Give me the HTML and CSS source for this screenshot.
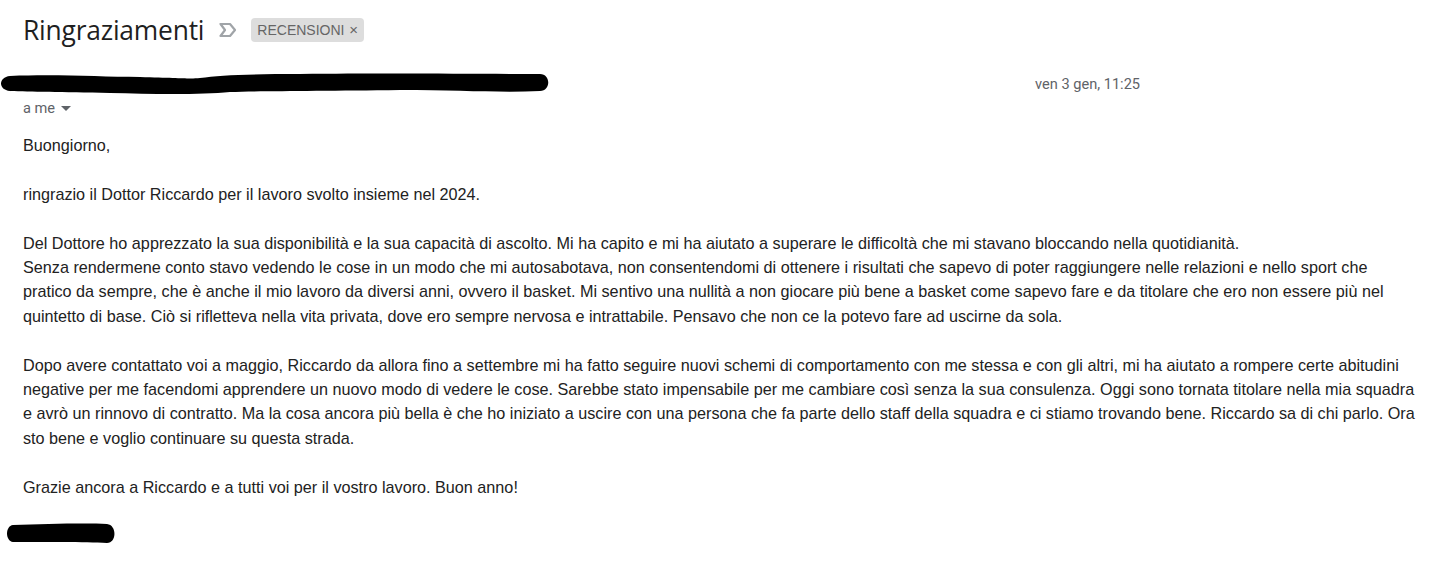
FILE: index.html
```html
<!DOCTYPE html>
<html lang="it">
<head>
<meta charset="utf-8">
<link rel="stylesheet" href="styles.css">
</head>
<body>
<div class="page">
  <div class="subject-row">
    <h1 class="subject">Ringraziamenti</h1>
    <svg class="importance" width="20" height="16" viewBox="0 0 20 16"><path d="M2.5 2 H12 L17 8 L12 14 H2.5 L7 8 Z" fill="none" stroke="#a0a4a8" stroke-width="2.2" stroke-linejoin="round"/></svg>
    <span class="chip">RECENSIONI <span class="chip-x">×</span></span>
  </div>
  <div class="sender-row">
    <svg class="redact-top" width="552" height="22" viewBox="0 0 552 22"><path d="M10 4 C60 2 100 5 140 5 C180 6 190 7 200 6 C220 3 250 2 300 2 C400 1 470 2 540 2 C551 2 551 19 540 19 C500 21 460 18 400 18 C320 19 260 19 230 20 C200 23 150 22 110 21 C60 20 30 20 10 19 C-2 18 -2 5 10 4 Z" fill="#000"/></svg>
    <span class="date">ven 3 gen, 11:25</span>
  </div>
  <div class="to-row">a me <span class="caret"></span></div>
  <div class="body">
    <p>Buongiorno,</p>
    <p>ringrazio il Dottor Riccardo per il lavoro svolto insieme nel 2024.</p>
    <p>Del Dottore ho apprezzato la sua disponibilità e la sua capacità di ascolto. Mi ha capito e mi ha aiutato a superare le difficoltà che mi stavano bloccando nella quotidianità.<br>
    Senza rendermene conto stavo vedendo le cose in un modo che mi autosabotava, non consentendomi di ottenere i risultati che sapevo di poter raggiungere nelle relazioni e nello sport che<br>
    pratico da sempre, che è anche il mio lavoro da diversi anni, ovvero il basket. Mi sentivo una nullità a non giocare più bene a basket come sapevo fare e da titolare che ero non essere più nel<br>
    quintetto di base. Ciò si rifletteva nella vita privata, dove ero sempre nervosa e intrattabile. Pensavo che non ce la potevo fare ad uscirne da sola.</p>
    <p>Dopo avere contattato voi a maggio, Riccardo da allora fino a settembre mi ha fatto seguire nuovi schemi di comportamento con me stessa e con gli altri, mi ha aiutato a rompere certe abitudini<br>
    negative per me facendomi apprendere un nuovo modo di vedere le cose. Sarebbe stato impensabile per me cambiare così senza la sua consulenza. Oggi sono tornata titolare nella mia squadra<br>
    e avrò un rinnovo di contratto. Ma la cosa ancora più bella è che ho iniziato a uscire con una persona che fa parte dello staff della squadra e ci stiamo trovando bene. Riccardo sa di chi parlo. Ora<br>
    sto bene e voglio continuare su questa strada.</p>
    <p>Grazie ancora a Riccardo e a tutti voi per il vostro lavoro. Buon anno!</p>
  </div>
  <svg class="redact-bottom" width="112" height="22" viewBox="0 0 112 22"><path d="M8 2 C40 1 80 0 102 1 C112 2 112 20 102 20 C80 19 40 19 8 19 C0 18 0 3 8 2 Z" fill="#000"/></svg>
</div>
</body>
</html>
```

FILE: styles.css
```css
html, body {
  margin: 0;
  padding: 0;
  background: #fff;
}
.page {
  padding: 0 0 0 23px;
  font-family: "Liberation Sans", Arial, sans-serif;
  color: #222;
}
.subject-row {
  display: flex;
  align-items: center;
  height: 60px;
}
.subject {
  margin: 0;
  font-family: "Open Sans", Roboto, sans-serif;
  font-weight: 400;
  font-size: 26.4px;
  color: #1f1f1f;
  letter-spacing: -0.2px;
}
.importance {
  margin-left: 14px;
}
.chip {
  margin-left: 13px;
  background: #dddddd;
  color: #666;
  border-radius: 4px;
  font-size: 14px;
  padding: 3px 6px 3px 6px;
  line-height: 17px;
}
.chip-x {
  font-size: 15px;
  margin-left: 1px;
}
.sender-row {
  display: flex;
  align-items: center;
  height: 24px;
  margin-top: 11px;
  margin-left: -23px;
}
.redact-top {
  display: block;
}
.date {
  margin-left: 483px;
  font-family: Roboto, "Liberation Sans", sans-serif;
  font-size: 14.6px;
  color: #5f6368;
  margin-top: 2px;
}
.to-row {
  margin-top: 3px;
  font-family: Roboto, "Liberation Sans", sans-serif;
  font-size: 14.6px;
  color: #5f6368;
  display: flex;
  align-items: center;
  height: 20px;
}
.caret {
  display: inline-block;
  margin-left: 6px;
  width: 0;
  height: 0;
  border-left: 5px solid transparent;
  border-right: 5px solid transparent;
  border-top: 5px solid #5f6368;
}
.body {
  margin-top: 15px;
  font-size: 16.2px;
  line-height: 24.4px;
  color: #222;
  white-space: nowrap;
}
.body p {
  margin: 0 0 24.4px 0;
}
.redact-bottom {
  display: block;
  margin-left: -18px;
  margin-top: 9px;
}
```
